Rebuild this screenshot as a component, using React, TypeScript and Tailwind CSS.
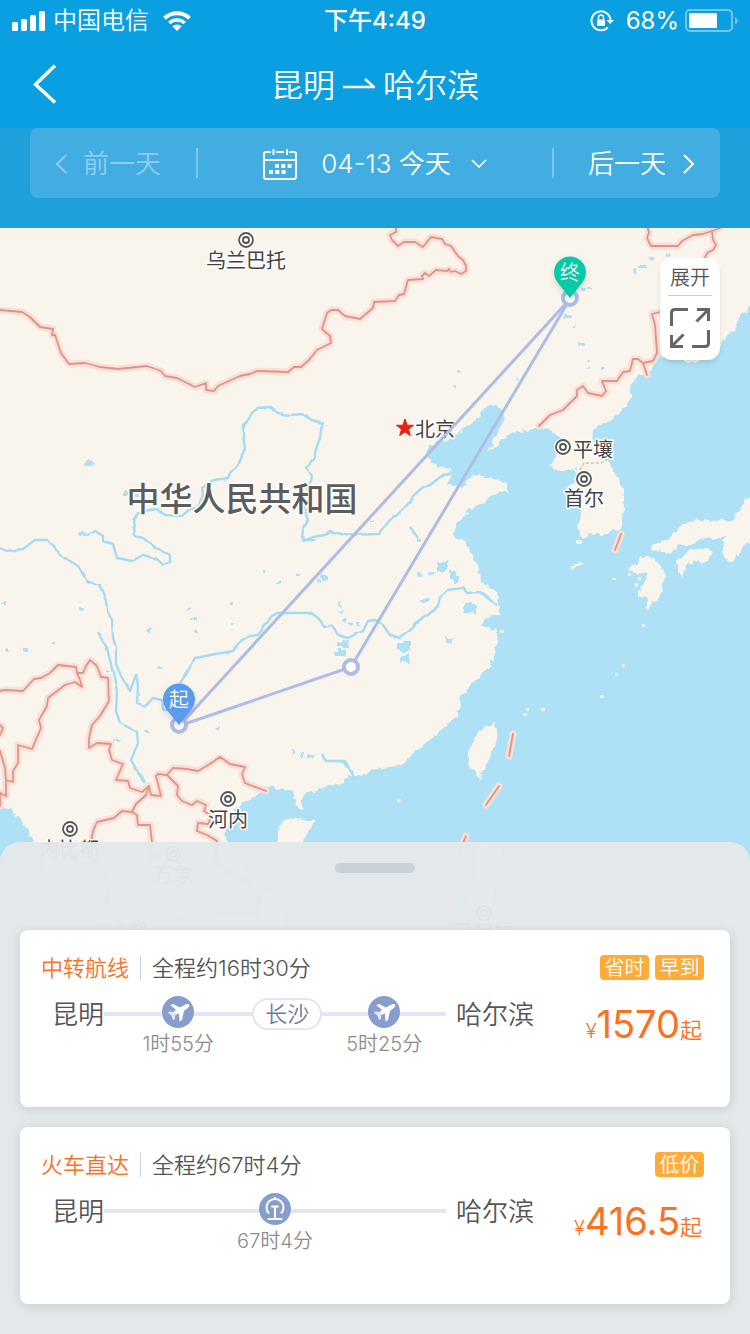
import type { ReactNode } from "react";

type Place = {
  name: string;
  dot: [number, number];
  label: [number, number];
  anchor?: "start" | "middle";
};

type Leg = {
  kind: "plane" | "train";
  time: string;
  grow: string;
};

type Plan = {
  type: string;
  total: string;
  from: string;
  to: string;
  via?: string;
  legs: Leg[];
  tags: string[];
  price: string;
};

const PLANS: Plan[] = [
  {
    type: "中转航线",
    total: "全程约16时30分",
    from: "昆明",
    to: "哈尔滨",
    via: "长沙",
    legs: [
      { kind: "plane", time: "1时55分", grow: "flex-[6]" },
      { kind: "plane", time: "5时25分", grow: "flex-[5]" },
    ],
    tags: ["省时", "早到"],
    price: "1570",
  },
  {
    type: "火车直达",
    total: "全程约67时4分",
    from: "昆明",
    to: "哈尔滨",
    legs: [{ kind: "train", time: "67时4分", grow: "flex-1" }],
    tags: ["低价"],
    price: "416.5",
  },
];

const PLACES: Place[] = [
  { name: "乌兰巴托", dot: [246, 240], label: [246, 268] },
  { name: "平壤", dot: [563, 447], label: [573, 457], anchor: "start" },
  { name: "首尔", dot: [584, 479], label: [584, 506] },
  { name: "河内", dot: [228, 799], label: [228, 827] },
  { name: "内比都", dot: [70, 829], label: [69, 857] },
  { name: "万象", dot: [173, 854], label: [173, 882] },
  { name: "马尼拉", dot: [484, 913], label: [484, 940] },
  { name: "曼谷", dot: [139, 928], label: [139, 956] },
];

const LAND = [
  // mainland, clockwise from the top left
  "M-10 218 H760 V300 L750 306 740 316 735 328 728 337 722 341 716 350 702 360 688 363 676 357 667 356 657 358 654 364 647 375 638 375 630 388 631 396 628 405 618 415 610 420 601 424 593 430 592 440 598 450 603 458 611 466 617 475 622 484 623 491 624 508 623 521 618 531 610 530 600 535 593 533 584 538 580 536 577 526 582 515 578 501 567 488 574 482 580 473 572 467 566 471 558 471 550 465 555 457 562 448 567 441 558 435 549 429 539 427 530 430 520 431 508 436 500 441 494 448 487 451 492 445 495 436 500 426 504 418 503 411 497 406 488 405 483 410 480 413 477 420 470 425 462 430 453 436 449 441 438 443 428 446 427 458 433 463 440 466 450 468 449 476 448 485 456 486 463 488 467 480 472 476 483 475 491 478 500 481 508 485 507 491 500 491 490 497 483 503 475 506 468 511 464 516 460 521 454 528 452 536 461 540 470 548 474 560 480 571 481 583 489 586 497 591 498 602 500 608 498 615 488 617 480 627 490 627 497 633 498 643 495 651 494 660 490 666 482 674 470 685 466 692 458 698 460 706 458 715 449 723 440 731 430 739 420 748 410 756 403 765 392 767 380 768 368 772 357 778 350 774 343 783 330 785 317 790 305 793 302 798 302 805 305 811 298 810 295 803 293 790 280 790 272 786 264 788 257 795 250 800 238 806 233 813 230 821 226 830 225 840 232 855 246 870 265 890 282 910 288 940 V1000 H130 L110 935 80 895 45 870 33 842 29 833 23 825 20 818 13 811 6 808 -10 808Z",
  // Taiwan, Hainan, Luzon
  "M495 723 L497 738 493 748 490 758 485 768 481 773 480 782 478 774 473 771 468 762 468 752 472 744 475 738 478 733 483 728 489 726Z",
  "M277 831 L283 821 292 819 300 818 306 820 315 821 310 829 305 838 302 845 285 848 277 842Z",
  "M475 845 L500 848 506 870 494 888 490 910 478 915 468 900 476 880Z",
  // Japan
  "M628 568 L638 564 640 558 647 556 654 561 662 563 661 570 667 575 662 588 658 601 653 601 649 610 647 598 642 597 638 598 640 588 645 581 646 573 634 574Z",
  "M677 571 L676 561 682 558 687 551 700 548 706 547 712 553 708 560 703 564 698 561 687 563 686 570 682 576Z",
  "M650 546 L660 542 670 538 678 529 687 521 700 520 718 521 733 520 738 512 745 500 760 485 V543 L748 544 740 549 734 560 729 562 723 555 723 545 726 536 715 539 703 538 692 545 680 545 670 553 662 550 652 551Z",
  "M571 566 L582 562 581 565 573 568Z",
  "M500 484 L508 486 506 490 500 489Z",
];

const BORDERS = [
  "M0 310 L22 312 30 317 40 327 53 329 52 335 55 335 61 353 69 364 85 363 100 367 118 369 147 366 161 371 165 376 177 378 195 387 206 383 206 390 214 391 218 386 240 376 250 374 257 371 288 372 294 367 301 367 309 360 317 350 331 343 330 336 322 329 327 313 331 310 338 310 345 316 360 319 373 308 374 302 395 301 399 295 404 294 408 280 423 279 422 276 425 273 429 276 436 270 447 271 449 269 451 272 455 271 461 274 466 271 466 266 463 260 458 256 451 246 445 244 442 239 431 237 423 247 415 242 404 242 398 246 392 240 390 235 396 232 396 226",
  "M647 226 L649 232 647 238 651 246 678 246 682 241 693 235 703 234 712 231 713 240 716 245 713 250 707 253 704 260",
  "M712 231 L720 228",
  "M660 312 L652 314 655 325 657 353 653 361 643 363 647 375 M643 363 L638 359 633 359 630 371 623 372 617 381 602 381 606 391 602 396 588 393 583 386 577 390 577 396 563 410 550 415 539 426",
  "M0 691 L5 690 23 691 34 679 41 678 50 673 58 665 76 667 77 673 83 673 86 666 90 660 97 666 101 677 108 678 109 701 100 716 92 725 89 738 89 748 97 743 111 744 109 750 112 760 123 764 116 780 128 781 130 788 142 792 149 786 151 795 161 796 156 776 158 774 167 775 173 768 187 769 198 771 210 764 220 757 230 764 245 767 242 774 245 783 250 785 266 791",
  "M77 673 L80 680 82 687 75 682 65 685 48 698 47 706 39 720 41 728 32 749 18 745 18 763 13 771 13 782 6 780 6 796 0 793",
  "M0 725 L3 728 0 735 M0 751 L5 768 6 780 M0 806 V793",
  "M149 786 L146 795 136 804 132 812 122 811 114 818 97 822 93 831 91 842 98 865 110 882 105 905 130 935",
  "M132 812 L137 815 138 825 150 825 152 842 150 860 165 850",
  "M167 775 L178 786 177 795 182 801 192 805 197 801 206 805 204 811 212 816 208 824 198 823 197 831 207 835 217 841 214 860 225 870 245 882 258 896 257 915 215 915 180 918",
  "M621 534 L615 550",
  "M513 734 L509 756",
  "M499 786 L486 805",
  "M466 836 L458 855",
  "M451 888 V908",
];

const RIVERS = [
  "M450 474 L443 475 430 485 423 487 413 496 411 501 397 515 390 520 378 534 345 535 330 531 325 535 313 537 303 541 302 536 303 530 308 520 304 508 305 495 308 488 312 478 306 468 314 458 317 446 320 438 322 423 312 420 302 414 290 415 277 413 270 407 258 408 252 413 248 420 243 425 243 437 245 448 240 461 235 468 230 473 228 478 213 480 202 488 203 495 197 508 190 509 182 516 165 515 157 509 143 511 133 520 135 536 143 538 155 547 170 555 170 563 163 565 157 559 143 555 132 561 117 558 113 544 103 541 103 536 95 531 88 535 80 533",
  "M0 548 L7 551 23 549 35 540 47 540 62 556 78 566 87 581 100 586 106 601 107 611 112 620 113 638 116 648 116 664 121 676 130 691 136 675 138 685 137 703 145 706 153 698 162 700 163 709 172 709 M180 683 L188 671 195 658 210 655 233 651 242 640 250 636 258 635 272 616 277 613 312 613 320 620 324 627 332 625 338 635 348 638 363 631 368 621 375 620 383 625 390 635 400 638 413 628 415 623 428 615 438 606 440 597 447 590 463 588 467 593 480 592 497 605",
  "M98 632 L102 640 107 648 113 673 117 691 116 711 120 723 137 732 138 743 131 760 145 784",
  "M322 755 L326 761 345 761 355 779",
  "M410 527 L418 538 M302 540 H315",
];

// small lakes, kept as x, y, width, height
const LAKES: [number, number, number, number][] = [
  [85, 461, 8, 4], [123, 490, 7, 5], [134, 491, 6, 6], [80, 532, 9, 4],
  [457, 370, 4, 3], [453, 385, 3, 3], [369, 520, 4, 3], [516, 378, 3, 3],
  [632, 269, 5, 4], [638, 265, 8, 3], [648, 258, 6, 3], [665, 253, 6, 4],
  [581, 287, 5, 3], [587, 287, 4, 3], [564, 315, 6, 3], [573, 325, 3, 3],
  [579, 342, 5, 4], [587, 360, 3, 3], [587, 366, 3, 3], [601, 367, 4, 3],
  [2, 602, 4, 3], [80, 607, 4, 3], [51, 642, 4, 3], [24, 648, 4, 3],
  [5, 648, 4, 3], [187, 607, 4, 3], [191, 617, 4, 3], [194, 630, 4, 3],
  [146, 629, 4, 3], [159, 666, 4, 3], [230, 602, 4, 3], [231, 622, 4, 3],
  [105, 670, 5, 3], [144, 730, 4, 3], [115, 738, 4, 3], [217, 727, 3, 3],
  [276, 580, 5, 3], [262, 569, 3, 3], [297, 574, 3, 3], [322, 575, 6, 6],
  [317, 579, 4, 3], [338, 601, 3, 5], [340, 610, 3, 3], [342, 619, 4, 3],
  [349, 622, 4, 3], [356, 623, 4, 3], [337, 642, 12, 5], [334, 650, 13, 6],
  [437, 562, 10, 9], [450, 570, 6, 8], [454, 577, 4, 7], [428, 571, 6, 4],
  [417, 573, 5, 3], [421, 599, 8, 4], [464, 604, 12, 9], [445, 637, 3, 3],
  [399, 642, 12, 9], [401, 655, 8, 7], [445, 639, 8, 4], [416, 538, 5, 4],
  [291, 749, 3, 4], [300, 753, 3, 3], [307, 755, 9, 3],
];

const ISLETS: [number, number, number, number][] = [
  [526, 708, 3, 3], [523, 713, 4, 3], [541, 708, 4, 3], [642, 624, 3, 3],
  [622, 664, 3, 3], [615, 673, 3, 3], [600, 695, 4, 3], [397, 799, 4, 3],
  [500, 630, 4, 3], [612, 578, 4, 2], [576, 540, 6, 4], [628, 573, 3, 3],
  [635, 583, 3, 4], [638, 577, 3, 3],
];

function RouteMap() {
  return (
    <svg
      className="absolute inset-0 size-full"
      viewBox="0 228 750 1106"
      preserveAspectRatio="xMidYMin slice"
      role="img"
      aria-label="昆明到哈尔滨路线地图"
    >
      <defs>
        <filter id="coast" x="-2%" y="-2%" width="104%" height="104%">
          <feTurbulence type="fractalNoise" baseFrequency="0.16" numOctaves="2" seed="4" />
          <feDisplacementMap in="SourceGraphic" scale="7" xChannelSelector="R" yChannelSelector="G" />
        </filter>
        <filter id="line" x="-2%" y="-2%" width="104%" height="104%">
          <feTurbulence type="fractalNoise" baseFrequency="0.1" numOctaves="1" seed="9" />
          <feDisplacementMap in="SourceGraphic" scale="3" xChannelSelector="R" yChannelSelector="G" />
        </filter>
      </defs>

      <rect x="-10" y="200" width="770" height="1150" fill="#aee1f6" />
      <g fill="#f9f5ed" filter="url(#coast)">
        {LAND.map((d) => (
          <path key={d} d={d} />
        ))}
      </g>
      {ISLETS.map(([x, y, w, h]) => (
        <rect key={`${x}-${y}`} x={x} y={y} width={w} height={h} rx="1" fill="#f3f3ec" />
      ))}

      <g fill="none" stroke="#a6dcf3" strokeWidth="2.4" strokeLinejoin="round" filter="url(#line)">
        {RIVERS.map((d) => (
          <path key={d} d={d} />
        ))}
      </g>
      <g fill="#aee1f6" filter="url(#coast)">
        {LAKES.map(([x, y, w, h]) => (
          <rect key={`${x}-${y}`} x={x} y={y} width={w} height={h} rx="1" />
        ))}
      </g>

      <g fill="none" strokeLinejoin="round" strokeLinecap="round">
        {BORDERS.map((d) => (
          <path key={d} d={d} stroke="#f8dfd7" strokeWidth="7" />
        ))}
        {BORDERS.map((d) => (
          <path key={d} d={d} stroke="#df9586" strokeWidth="1.8" />
        ))}
      </g>
      <path d="M580 470 L584 463 H601 L607 459" fill="none" stroke="#b9a58c" strokeDasharray="3 2" />

      <g fontSize="20" fontWeight="400">
        {PLACES.map(({ name, dot, label, anchor = "middle" }) => (
          <g key={name}>
            <circle cx={dot[0]} cy={dot[1]} r="9" fill="#fff" />
            <circle cx={dot[0]} cy={dot[1]} r="7" fill="#fff" stroke="#555" strokeWidth="1.8" />
            <circle cx={dot[0]} cy={dot[1]} r="3" fill="#fff" stroke="#555" strokeWidth="1.8" />
            <MapLabel x={label[0]} y={label[1]} anchor={anchor}>
              {name}
            </MapLabel>
          </g>
        ))}
        <MapLabel x={415} y={437} anchor="start">
          北京
        </MapLabel>
        <g fontSize="33" fontWeight="500">
          <MapLabel x={242} y={511} anchor="middle" color="#5c5c5c">
            中华人民共和国
          </MapLabel>
        </g>
      </g>
      <path
        d="M405 419 L407.200 425.200 413.600 425.300 408.500 429.200 410.300 435.600 405 431.900 399.700 435.600 401.500 429.200 396.400 425.300 402.800 425.200Z"
        fill="#e4260f"
        stroke="#e4260f"
      />

      <path d="M570 299 L179 726 L351 667 Z" fill="none" stroke="#aebde3" strokeWidth="3" />
      <g fill="#fff" stroke="#aebde3" strokeWidth="4">
        <circle cx="570" cy="298" r="7" />
        <circle cx="179" cy="725" r="7" />
        <circle cx="351" cy="667" r="7" />
      </g>
      <Pin x={570} y={298} color="#07cba7" text="终" />
      <Pin x={179} y={725} color="#5a9bef" text="起" />
    </svg>
  );
}

type MapLabelProps = {
  x: number;
  y: number;
  anchor: "start" | "middle";
  color?: string;
  children: ReactNode;
};

function MapLabel({ x, y, anchor, color = "#444", children }: MapLabelProps) {
  return (
    <text
      x={x}
      y={y}
      textAnchor={anchor}
      fill={color}
      stroke="#fff"
      strokeWidth="3"
      strokeLinejoin="round"
      paintOrder="stroke"
    >
      {children}
    </text>
  );
}

function Pin({ x, y, color, text }: { x: number; y: number; color: string; text: string }) {
  return (
    <g transform={`translate(${x} ${y})`} className="drop-shadow-md">
      <path d="M0 0 L-12.500 -15.500 A16 16 0 1 1 12.500 -15.500 Z" fill={color} />
      <text y="-18" textAnchor="middle" fontSize="20" fill="#fff">
        {text}
      </text>
    </g>
  );
}

function Chevron({ d, className, width = 2 }: { d: string; className: string; width?: number }) {
  return (
    <svg className={className} fill="none" stroke="currentColor" strokeWidth={width} aria-hidden="true">
      <path d={d} />
    </svg>
  );
}

function StatusBar() {
  return (
    <div className="grid h-10 grid-cols-[1fr_auto_1fr] items-center px-3 pt-0.5 text-2xl leading-8">
      <div className="flex items-center gap-2">
        <svg className="h-5 w-[33px]" viewBox="0 0 33 20" fill="currentColor" aria-hidden="true">
          <rect y="11" width="6" height="9" rx="1.500" />
          <rect x="9" y="8" width="6" height="12" rx="1.500" />
          <rect x="18" y="4" width="6" height="16" rx="1.500" />
          <rect x="27" width="6" height="20" rx="1.500" />
        </svg>
        <span>中国电信</span>
        <svg className="ml-1.5 h-5 w-7" viewBox="0 0 28 20" aria-hidden="true">
          <path d="M1.500 7.200 A18.200 18.200 0 0 1 26.500 7.200" fill="none" stroke="currentColor" strokeWidth="4" />
          <path d="M6.300 12 A11.500 11.500 0 0 1 21.700 12" fill="none" stroke="currentColor" strokeWidth="3.600" />
          <path d="M14 20 L9.300 15.300 A7 7 0 0 1 18.700 15.300 Z" fill="currentColor" />
        </svg>
      </div>
      <span className="font-medium">下午4:49</span>
      <div className="flex items-center justify-end">
        <svg className="mr-3 h-[22px] w-6" viewBox="0 0 24 22" fill="none" stroke="currentColor" aria-hidden="true">
          <path d="M17.800 17.500 A9.500 9.500 0 1 1 20.500 10.500" strokeWidth="2" />
          <path d="M16.500 10 H24 L20.200 14 Z" fill="currentColor" stroke="none" />
          <rect x="7" y="9.500" width="8" height="6.500" rx="1" fill="currentColor" stroke="none" />
          <path d="M8.500 10 V7.500 A2.500 2.500 0 0 1 13.500 7.500 V10" strokeWidth="1.400" />
        </svg>
        <span className="font-normal">68%</span>
        <svg className="ml-1.5 h-6 w-[53px]" viewBox="0 0 53 24" aria-hidden="true">
          <rect x="1" y="1" width="46" height="21" rx="4" fill="none" stroke="#75c6ed" strokeWidth="2" />
          <rect x="4" y="4" width="28" height="15" rx="1" fill="#fff" />
          <path d="M50 8 C53.600 9.500 53.600 14 50 15.500 Z" fill="#75c6ed" />
        </svg>
      </div>
    </div>
  );
}

function TitleBar() {
  return (
    <div className="grid h-[88px] grid-cols-[1fr_auto_1fr] items-center px-8">
      <button type="button" aria-label="返回" className="justify-self-start">
        <Chevron className="h-10 w-6" d="M23 1.500 L3.500 20.500 L23 38.500" width={3.4} />
      </button>
      <h1 className="flex items-center gap-2 pt-1 text-[32px] leading-10">
        昆明
        <svg className="h-4 w-8" fill="none" stroke="currentColor" strokeWidth="2.400" aria-label="到">
          <path d="M0 9 H31 L22 1" />
        </svg>
        哈尔滨
      </h1>
    </div>
  );
}

function DateBar() {
  return (
    <div className="bg-[#1ea0db] px-[30px] pb-[30px]">
      <div className="flex h-[70px] items-center rounded-lg bg-[#42ade1] text-[26px] leading-9">
        <button type="button" disabled className="flex w-[166px] items-center gap-4 pt-0.5 pl-[25px] text-[#8fcdee]">
          <Chevron className="h-5 w-3" d="M11 1 L2 10 L11 19" />
          前一天
        </button>
        <span className="h-[30px] w-0.5 bg-[#7bc4ea]" />
        <button type="button" className="flex flex-1 items-center justify-center pt-0.5">
          <svg className="mr-6 h-[31px] w-[34px]" viewBox="0 0 34 31" fill="none" stroke="currentColor" strokeWidth="2" aria-hidden="true">
            <path d="M8 3 H3 Q1 3 1 5 V28 Q1 30 3 30 H31 Q33 30 33 28 V5 Q33 3 31 3 H26 M13 3 H21 M1 11 H33" />
            <path d="M10.500 0 V6 M24 0 V6" />
            <path d="M12 17 H28.500 M6 23 H23" strokeWidth="4" strokeDasharray="4 2.300" />
          </svg>
          04-13 今天
          <Chevron className="ml-5 h-[10px] w-4" d="M1 1 L8 8 L15 1" width={1.6} />
        </button>
        <span className="h-[30px] w-0.5 bg-[#7bc4ea]" />
        <button type="button" className="flex w-[166px] items-center justify-end gap-[17px] pt-0.5 pr-[25px]">
          后一天
          <Chevron className="h-5 w-3" d="M1 1 L10 10 L1 19" />
        </button>
      </div>
    </div>
  );
}

function ExpandButton() {
  return (
    <button
      type="button"
      className="absolute top-[30px] right-[30px] flex w-[60px] flex-col items-center rounded-xl bg-white px-2 pt-1 pb-3 text-xl leading-8 text-[#555] shadow-md"
    >
      展开
      <span className="mt-px mb-3 h-px w-full bg-[#ccc]" />
      <svg className="size-10" viewBox="0 0 40 40" fill="none" stroke="#666" strokeWidth="3" aria-hidden="true">
        <path d="M1.500 18 V5 Q1.500 1.500 5 1.500 H18" />
        <path d="M38.500 22 V35 Q38.500 38.500 35 38.500 H22" />
        <path d="M27 1.500 H38.500 V13 M38 2 L26.500 13.500" />
        <path d="M1.500 27 V38.500 H13 M2 38 L13.500 26.500" />
      </svg>
    </button>
  );
}

function LegIcon({ kind }: { kind: Leg["kind"] }) {
  return (
    <svg className="size-8" viewBox="0 0 32 32" aria-hidden="true">
      <circle cx="16" cy="16" r="16" fill="#869dce" />
      {kind === "plane" ? (
        <>
          <path
            d="M27 8.500 C25.500 7.600 24 8.200 22.500 9 L18 11.600 L11 8 L8.300 9.200 L14 13.800 L11.500 16 L14.500 18.500 L17 17.500 L17.500 25.500 L20 24 L22 15 L26 11.800 C27.400 10.600 27.600 9.200 27 8.500 Z"
            fill="#fff"
          />
          <path d="M11.500 16 L7.500 15.500 L5.800 16.800 L9.500 19.600 L11 24.200 L12.800 23 L13.200 19.200 L14.500 18.500 Z" fill="#e3e8f4" />
        </>
      ) : (
        <g fill="none" stroke="#fff" strokeWidth="2">
          <path d="M10 20.500 A8.500 8.500 0 1 1 22 20.500" />
          <path d="M13 13.500 H19 M9.500 26 H22.500" strokeLinecap="round" />
          <path d="M16 13.500 V25" />
          <path d="M16 4 V7" />
        </g>
      )}
    </svg>
  );
}

function Track({ leg }: { leg: Leg }) {
  return (
    <div className={`flex min-w-0 flex-col items-center ${leg.grow}`}>
      <div className="flex w-full items-center">
        <span className="mt-1 h-1 flex-1 bg-[#e1e6f2]" />
        <LegIcon kind={leg.kind} />
        <span className="mt-1 h-1 flex-1 bg-[#e1e6f2]" />
      </div>
      <span className="mt-1 text-xl leading-6 whitespace-nowrap text-[#8c8c8c]">{leg.time}</span>
    </div>
  );
}

function City({ children }: { children: ReactNode }) {
  return <span className="text-[26px] leading-[38px] whitespace-nowrap text-[#555]">{children}</span>;
}

function PlanCard({ plan }: { plan: Plan }) {
  const [first, ...rest] = plan.legs;
  return (
    <article className="flex rounded-lg bg-white pt-[25px] pr-[26px] pb-[51px] pl-[21px] shadow-[0_2px_12px_rgba(0,0,0,0.12)]">
      <div className="min-w-0 flex-1">
        <div className="flex items-center text-[22px] leading-[26px]">
          <h2 className="text-[#ff6f1e]">{plan.type}</h2>
          <span className="mx-[11px] h-6 w-px bg-[#c9d1df]" />
          <span className="text-[#555]">{plan.total}</span>
        </div>
        <div className="mt-[15px] flex items-start pl-[11px]">
          <City>{plan.from}</City>
          <Track leg={first} />
          {plan.via ? (
            <span className="mt-0.5 rounded-full border-2 border-[#e1e6f2] px-[11px] text-[22px] leading-7 text-[#6d7ba0]">
              {plan.via}
            </span>
          ) : null}
          {rest.map((leg) => (
            <Track key={leg.time} leg={leg} />
          ))}
          <span className="w-2.5" />
          <City>{plan.to}</City>
        </div>
      </div>
      <div className="flex w-[170px] flex-col items-end">
        <div className="flex gap-1.5">
          {plan.tags.map((tag) => (
            <span
              key={tag}
              className="w-[49px] rounded bg-[#ffab38] pt-px text-center text-xl leading-6 text-white"
            >
              {tag}
            </span>
          ))}
        </div>
        <p className="mt-6 flex items-baseline pr-0.5 text-[22px] leading-10 text-[#ff6f1e]">
          <span className="text-xl">¥</span>
          <span className="text-[38px] font-normal">{plan.price}</span>
          <span>起</span>
        </p>
      </div>
    </article>
  );
}

export default function App() {
  return (
    <div className="flex min-h-screen flex-col bg-[#0a9fe0] font-['Inter','Noto_Sans_CJK_SC',sans-serif] font-[350] text-white">
      <header>
        <StatusBar />
        <TitleBar />
        <DateBar />
      </header>
      <main className="relative flex flex-1 flex-col justify-end overflow-hidden">
        <RouteMap />
        <ExpandButton />
        <section className="relative rounded-t-[20px] bg-[#e4e8ea]/97 px-5 pb-[30px]">
          <div className="flex h-[88px] justify-center pt-[21px]">
            <span className="h-2.5 w-20 rounded-full bg-[#c9d1da]" />
          </div>
          <div className="flex flex-col gap-5">
            {PLANS.map((plan) => (
              <PlanCard key={plan.type} plan={plan} />
            ))}
          </div>
        </section>
      </main>
    </div>
  );
}
